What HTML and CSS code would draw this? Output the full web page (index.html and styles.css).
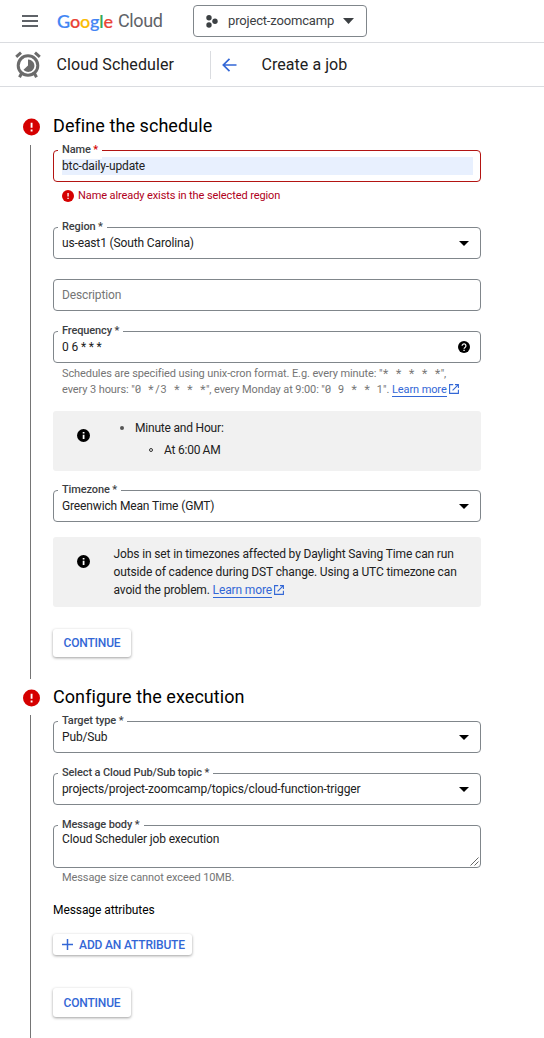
FILE: index.html
```html
<!DOCTYPE html>
<html lang="en">
<head>
<meta charset="utf-8">
<title>Create a job – Cloud Scheduler</title>
<link rel="stylesheet" href="styles.css">
</head>
<body>
<svg width="0" height="0" class="defs" aria-hidden="true">
  <symbol id="error" viewBox="0 0 20 20"><circle cx="10" cy="10" r="10" fill="#d50000"/><path d="M9 5h2.2v6H9zM9 13h2.2v2.2H9z" fill="#fff"/></symbol>
  <symbol id="info" viewBox="0 0 20 20"><circle cx="10" cy="10" r="10"/><path d="M8.800 4.500h2.700v2.500H8.800zM8.800 8.700h2.700v6.500H8.800z" fill="#fff"/></symbol>
  <symbol id="launch" viewBox="0 0 10 10"><path d="M4.200 .6H.6v8.800h8.800V5.800M6 .6h3.400V4M9.400 .6L3.600 6.400" fill="none" stroke="currentColor" stroke-width="1.100"/></symbol>
</svg>
<header class="topbar">
  <svg class="menu" viewBox="0 0 16 12"><path d="M0 1h16M0 6h16M0 11h16" stroke="#5f6368" stroke-width="1.800"/></svg>
  <div class="logo"><span class="google"><i class="b">G</i><i class="r">o</i><i class="y">o</i><i class="b">g</i><i class="g">l</i><i class="r">e</i></span><span class="cloud">Cloud</span></div>
  <div class="picker">
    <svg class="dots" viewBox="0 0 12 13"><g fill="#3c4043"><circle cx="3" cy="2.800" r="2.700"/><circle cx="3" cy="10" r="2.700"/><circle cx="9" cy="6.300" r="2.700"/></g></svg>
    <span>project-zoomcamp</span>
    <svg class="caret" viewBox="0 0 11 6"><path d="M0 0h11L5.500 6z" fill="#3c4043"/></svg>
  </div>
</header>
<div class="subbar">
  <svg class="clock" viewBox="0 0 26 28"><g fill="none" stroke="#6b6b6b"><circle cx="13" cy="14.500" r="9.800" stroke-width="3"/><path d="M1.200 5.800L6 1.700M24.800 5.800L20 1.700" stroke-width="3"/><path d="M6.500 22.500L4.500 26.300M19.500 22.500l2 3.800" stroke-width="3"/></g><path d="M13 8.500v6L8.500 18.700A6.200 6.200 0 1 0 13 8.500z" fill="#6b6b6b"/></svg>
  <span class="product">Cloud Scheduler</span>
  <svg class="back" viewBox="0 0 15 14"><path d="M14.500 7H1.500M7.500 .8L1.300 7l6.200 6.200" fill="none" stroke="#3367d6" stroke-width="1.700"/></svg>
  <span class="title">Create a job</span>
</div>
<main>
  <section class="step first">
    <div class="rail"><svg class="err"><use href="#error"/></svg><div class="line"></div></div>
    <div class="body">
      <h2>Define the schedule</h2>
      <div class="field invalid"><label>Name <em>*</em></label><div class="autofill">btc-daily-update</div></div>
      <div class="errmsg"><svg><use href="#error"/></svg><span>Name already exists in the selected region</span></div>
      <div class="field region"><label>Region *</label><span class="value">us-east1 (South Carolina)</span><i class="arrow"></i></div>
      <div class="field desc"><span class="placeholder">Description</span></div>
      <div class="field"><label>Frequency *</label><span class="value cron">0 6 * * *</span>
        <svg class="help" viewBox="0 0 20 20"><circle cx="10" cy="10" r="10"/><path d="M6.800 8a3.200 3.200 0 1 1 5.200 2.500c-1.200.9-1.900 1.300-1.900 2.500" fill="none" stroke="#fff" stroke-width="2"/><path d="M9 14.500h2.200v2.200H9z" fill="#fff"/></svg></div>
      <p class="hint">Schedules are specified using unix-cron format. E.g. every minute: "<code>* * * * *</code>",<br>every 3 hours: "<code>0 */3 * * *</code>", every Monday at 9:00: "<code>0 9 * * 1</code>". <a>Learn more</a><svg class="ext"><use href="#launch"/></svg></p>
      <div class="note cronnote"><svg class="inf"><use href="#info"/></svg>
        <ul><li><i class="disc"></i>Minute and Hour:</li><li class="sub"><i class="ring"></i>At 6:00&#8201;AM</li></ul></div>
      <div class="field tz"><label>Timezone *</label><span class="value">Greenwich Mean Time (GMT)</span><i class="arrow"></i></div>
      <div class="note dst"><svg class="inf"><use href="#info"/></svg>
        <p>Jobs in set in timezones affected by Daylight Saving Time can run<br>outside of cadence during DST change. Using a UTC timezone can<br>avoid the problem. <a>Learn more</a><svg class="ext"><use href="#launch"/></svg></p></div>
      <button class="continue">CONTINUE</button>
    </div>
  </section>
  <section class="step second">
    <div class="rail"><svg class="err"><use href="#error"/></svg><div class="line"></div></div>
    <div class="body">
      <h2>Configure the execution</h2>
      <div class="field target"><label>Target type *</label><span class="value">Pub/Sub</span><i class="arrow"></i></div>
      <div class="field"><label>Select a Cloud Pub/Sub topic *</label><span class="value topic">projects/project-zoomcamp/topics/cloud-function-trigger</span><i class="arrow"></i></div>
      <div class="field area"><label>Message body *</label><span class="value">Cloud Scheduler job execution</span>
        <svg class="grip" viewBox="0 0 9 9"><path d="M.5 8.500l8-8M4.500 8.500l4-4" stroke="#555" stroke-width=".9"/></svg></div>
      <p class="hint size">Message size cannot exceed 10MB.</p>
      <h3>Message attributes</h3>
      <button class="add"><svg viewBox="0 0 11 11"><path d="M5.500 0v11M0 5.500h11" stroke="#3367d6" stroke-width="1.500"/></svg><span>ADD AN ATTRIBUTE</span></button>
      <button class="continue last">CONTINUE</button>
    </div>
  </section>
</main>
</body>
</html>
```
FILE: styles.css
```css
* { box-sizing: border-box; }
body { margin: 0; width: 544px; height: 1038px; overflow: hidden; background: #fff; color: #212121; font: 12px/18px Roboto, sans-serif; letter-spacing: -.14px; }
svg { display: block; flex: none; }
.defs { position: absolute; }
i { font-style: normal; }
h2, h3, p, ul { margin: 0; padding: 0; }

.topbar { display: flex; align-items: center; height: 43px; border-bottom: 1px solid #dadce0; padding-left: 22px; }
.menu { width: 16px; height: 12px; }
.logo { display: flex; margin-left: 19px; width: 136px; font: 18px/24px Lato, sans-serif; }
.google { width: 61px; font-weight: 500; -webkit-text-stroke: .2px; letter-spacing: -.15px; }
.cloud { color: #5f6368; font-family: Roboto, sans-serif; font-weight: 400; letter-spacing: -.4px; }
.b { color: #4285f4; } .r { color: #ea4335; } .y { color: #fbbc04; } .g { color: #34a853; }
.picker { display: flex; align-items: center; width: 174px; height: 32px; border: 1px solid #80868b; border-radius: 4px; padding-left: 12px; color: #3c4043; font-size: 13px; white-space: nowrap; }
.dots { width: 12px; height: 13px; margin-right: 10px; }
.picker span { width: 106px; letter-spacing: -.17px; }
.caret { width: 11px; height: 6px; margin-left: 9px; }

.subbar { display: flex; align-items: center; height: 44px; border-bottom: 1px solid #dadce0; padding-left: 15px; font-size: 16px; letter-spacing: .1px; }
.clock { width: 26px; height: 28px; }
.product { width: 154.500px; margin-left: 15.500px; line-height: 28px; border-right: 1px solid #dadce0; }
.back { width: 15px; height: 14px; margin-left: 11px; }
.title { margin-left: 24.500px; letter-spacing: .05px; }

.step { display: grid; grid-template-columns: 30px 428px; padding-left: 23px; }
.first { height: 571px; padding-top: 31px; }
.second { height: 380px; padding-top: 31px; }
.rail { display: flex; flex-direction: column; }
.err { width: 17px; height: 18px; }
.line { width: 1px; margin: 9px 0 0 7px; background: #757575; flex: 1; }
.first .line { margin-bottom: -21px; }
.second .line { margin-top: 8px; }
h2 { height: 32px; font-size: 18px; line-height: 15px; font-weight: 400; color: #000; letter-spacing: .07px; }
h3 { font-size: 12px; line-height: 18px; font-weight: 400; color: #000; margin: 15px 0; letter-spacing: -.08px; }

.field { position: relative; display: flex; align-items: center; height: 32px; border: 1px solid #80868b; border-radius: 4px; padding: 0 8px; margin-top: 20px; }
.field label { position: absolute; top: -10px; left: 4px; padding: 0 4px; background: #fff; color: #3c4043; font-size: 11px; line-height: 18px; font-weight: 500; letter-spacing: -.12px; }
.invalid { border-color: #b31412; margin-top: 0; }
.invalid em { color: #d50000; font-style: normal; }
.autofill { flex: 1; height: 18px; line-height: 18px; margin-right: -1px; background: #e8f0fe; }
.errmsg { display: flex; align-items: center; gap: 4px; height: 13px; margin: 7px 0 0 9px; color: #b00020; font-size: 11px; letter-spacing: -.1px; }
.errmsg svg { width: 12px; height: 12px; }
.region { margin-top: 25px; }
.placeholder { color: #757575; }
.arrow { margin-left: auto; margin-right: 3px; border: 5px solid transparent; border-top-color: #000; border-bottom: 0; }
.help { width: 12px; height: 12px; margin-left: auto; margin-right: 2px; }
.hint { padding-left: 9px; height: 33px; padding-top: 1px; margin-top: 2px; font-size: 11px; line-height: 16px; color: #757575; white-space: nowrap; letter-spacing: -.1px; }
code { font: 10.8px/12px "Roboto Mono", "Liberation Mono", monospace; letter-spacing: 0; }
a { color: #3367d6; border-bottom: 1px solid #3367d6; }
.ext { display: inline-block; width: 10px; height: 10px; margin-left: 2px; color: #3367d6; vertical-align: -1px; }

.note { display: flex; background: #f1f1f1; border-radius: 3px; padding-left: 24px; white-space: nowrap; }
.inf { width: 13px; height: 13px; margin-top: 18px; }
.cronnote { height: 60px; margin-top: 13px; }
.cronnote ul { list-style: none; padding: 6px 0 0 30px; line-height: 22px; letter-spacing: -.2px; }
li { display: flex; align-items: center; }
.disc { width: 4px; height: 4px; border-radius: 50%; background: #555; margin-right: 11px; }
.sub { padding-left: 29px; }
.ring { width: 4px; height: 4px; border: 1px solid #333; border-radius: 50%; margin-right: 11px; }
.tz { margin-top: 19px; }
.dst { height: 70px; margin-top: 15px; }
.dst p { padding: 8px 0 0 23.5px; }

button { display: flex; align-items: center; justify-content: center; padding: 0; border: 0; border-radius: 3px; background: #fff; box-shadow: 0 1px 3px rgba(0,0,0,.38); color: #3367d6; font: 500 12px/16px Roboto, sans-serif; letter-spacing: -.17px; }
.continue { width: 78px; height: 28px; margin-top: 22px; }
.target { margin-top: 0; }
.area { height: 43px; align-items: flex-start; padding-top: 4px; }
.grip { position: absolute; right: 1px; bottom: 1px; width: 9px; height: 9px; }
.second .hint { height: 17px; margin-top: 1px; }
.add { width: 139px; height: 21px; gap: 6px; padding-left: 2px; }
.add svg { width: 11px; height: 11px; }
.last { height: 29px; margin-top: 33px; }
```
